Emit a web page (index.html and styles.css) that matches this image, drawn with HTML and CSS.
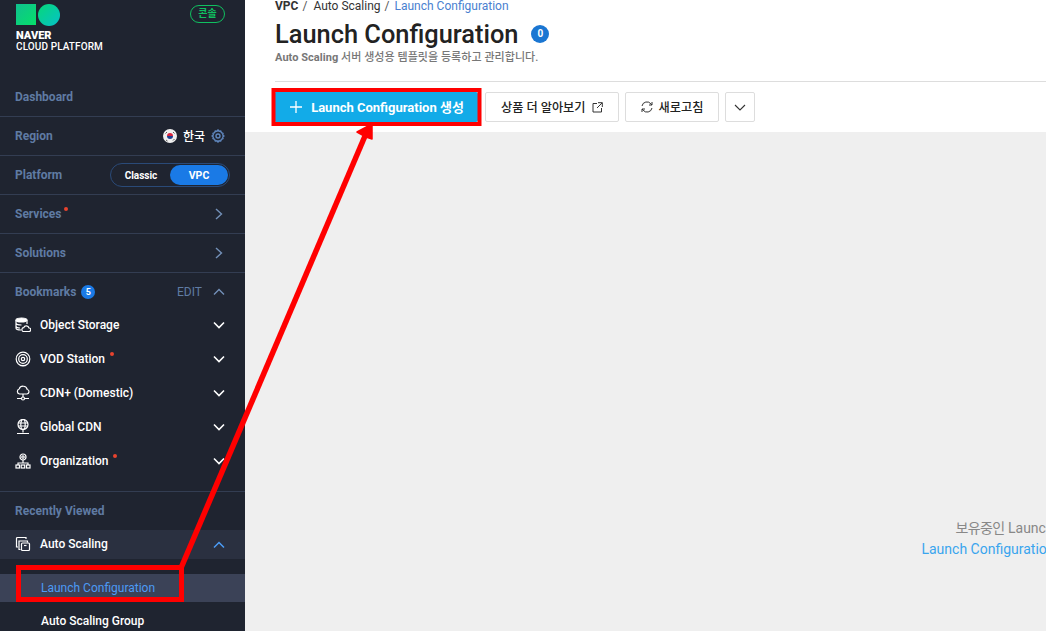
FILE: index.html
```html
<!DOCTYPE html>
<html lang="ko">
<head>
    <meta charset="UTF-8">
    <title>Launch Configuration</title>
    <link rel="stylesheet" href="styles.css">
</head>
<body>
    <aside class="sidebar">
        <div class="brand">
            <div class="brand-left">
                <div class="logo-marks">
                    <span class="logo-square"></span>
                    <span class="logo-circle"></span>
                </div>
                <div class="logo-naver">NAVER</div>
                <div class="logo-cloud">CLOUD PLATFORM</div>
            </div>
            <span class="console-badge">콘솔</span>
        </div>

        <div class="nav-row">Dashboard</div>
        <div class="nav-row">
            <span>Region</span>
            <span class="region">
                <svg class="flag" width="14" height="14" viewBox="0 0 14 14">
                    <circle cx="7" cy="7" r="7" fill="#f0f0f0"/>
                    <path d="M4 7a3 3 0 0 1 6 0z" fill="#d8243c"/>
                    <path d="M4 7a3 3 0 0 0 6 0z" fill="#1d3f8f"/>
                    <path d="M2.500 4.500l1.500-1.500M3 11l1.500 1M10 3l1.500 1.500M10 11.500l1.500-1.500" stroke="#555" stroke-width="1"/>
                </svg>
                <span class="region-name">한국</span>
                <svg class="gear" width="14" height="14" viewBox="0 0 14 14" fill="none" stroke="#5f86bd" stroke-width="1.400">
                    <path d="M7 1l1 1.300 1.700-.3.700 1.600 1.600.7-.3 1.700L13 7l-1.300 1 .3 1.700-1.600.7-.7 1.600-1.700-.3L7 13l-1-1.300-1.700.3-.7-1.600-1.600-.7.3-1.700L1 7l1.300-1L2 4.300l1.600-.7.7-1.600 1.700.3z"/>
                    <circle cx="7" cy="7" r="2"/>
                </svg>
            </span>
        </div>
        <div class="nav-row">
            <span>Platform</span>
            <div class="toggle">
                <span class="toggle-item">Classic</span>
                <span class="toggle-item toggle-on">VPC</span>
            </div>
        </div>
        <div class="nav-row">
            <span class="dotted">Services</span>
            <svg class="chev-right" width="8" height="12" viewBox="0 0 8 12"><path d="M1 1l5.500 5L1 11"/></svg>
        </div>
        <div class="nav-row">
            <span>Solutions</span>
            <svg class="chev-right" width="8" height="12" viewBox="0 0 8 12"><path d="M1 1l5.500 5L1 11"/></svg>
        </div>

        <div class="nav-row bookmarks-head">
            <span class="bookmarks-title">Bookmarks <span class="count">5</span></span>
            <span class="edit">EDIT
                <svg class="chev-up" width="12" height="8" viewBox="0 0 12 8"><path d="M1 6.500L6 1.500l5 5"/></svg>
            </span>
        </div>

        <ul class="bookmarks">
            <li class="item">
                <svg class="item-icon" width="16" height="16" viewBox="0 0 16 16">
                    <ellipse cx="6.500" cy="3" rx="5.500" ry="2" fill="#fff"/>
                    <path d="M1 3v8c0 1 2 2 5 2M12 3v4M1 6c0 1 2.500 2 5.500 2M1 9c0 1 2 2 4 2"/>
                    <path d="M8 14.500h6a1.500 1.500 0 0 0 0-3.500 2.800 2.800 0 0 0-5.300-.3A2 2 0 0 0 8 14.500z"/>
                </svg>
                <span class="item-label">Object Storage</span>
                <svg class="chev-down" width="12" height="8" viewBox="0 0 12 8"><path d="M1 1.500l5 5 5-5"/></svg>
            </li>
            <li class="item">
                <svg class="item-icon" width="16" height="16" viewBox="0 0 16 16">
                    <circle cx="8" cy="8" r="6.800"/>
                    <circle cx="8" cy="8" r="4.300"/>
                    <circle cx="8" cy="8" r="1.700"/>
                    <path d="M5 14.500h6"/>
                </svg>
                <span class="item-label dotted-item">VOD Station</span>
                <svg class="chev-down" width="12" height="8" viewBox="0 0 12 8"><path d="M1 1.500l5 5 5-5"/></svg>
            </li>
            <li class="item">
                <svg class="item-icon" width="16" height="16" viewBox="0 0 16 16">
                    <path d="M4.500 9h7.500a2.300 2.300 0 0 0 .3-4.500 4.300 4.300 0 0 0-8.200-.5 2.600 2.600 0 0 0 .4 5z"/>
                    <path d="M8 9v3M2 13.500h4.500M9.500 13.500H14"/>
                    <circle cx="8" cy="13.500" r="1.500"/>
                </svg>
                <span class="item-label">CDN+ (Domestic)</span>
                <svg class="chev-down" width="12" height="8" viewBox="0 0 12 8"><path d="M1 1.500l5 5 5-5"/></svg>
            </li>
            <li class="item">
                <svg class="item-icon" width="16" height="16" viewBox="0 0 16 16">
                    <circle cx="8" cy="5.500" r="5"/>
                    <ellipse cx="8" cy="5.500" rx="2.200" ry="5"/>
                    <path d="M3 4h10M3 7h10M8 10.500v3M2 14.500h12"/>
                </svg>
                <span class="item-label">Global CDN</span>
                <svg class="chev-down" width="12" height="8" viewBox="0 0 12 8"><path d="M1 1.500l5 5 5-5"/></svg>
            </li>
            <li class="item">
                <svg class="item-icon" width="16" height="16" viewBox="0 0 16 16">
                    <circle cx="8" cy="4" r="3"/>
                    <circle cx="8" cy="4" r="1.200"/>
                    <path d="M8 7v3M3 12v-2h10v2"/>
                    <rect x="1" y="12" width="3.500" height="3"/>
                    <rect x="6.200" y="12" width="3.500" height="3"/>
                    <rect x="11.500" y="12" width="3.500" height="3"/>
                </svg>
                <span class="item-label dotted-item">Organization</span>
                <svg class="chev-down" width="12" height="8" viewBox="0 0 12 8"><path d="M1 1.500l5 5 5-5"/></svg>
            </li>
        </ul>

        <div class="recent">
            <div class="recent-title">Recently Viewed</div>
            <div class="item item-open">
                <svg class="item-icon" width="16" height="16" viewBox="0 0 16 16">
                    <path d="M3 11H1.500V2.500a1 1 0 0 1 1-1H11V3"/>
                    <path d="M5.500 13.500H4V5h8.500v1.500"/>
                    <rect x="6.500" y="7" width="8" height="7.500" rx="1"/>
                    <path d="M9 9.500h2.500"/>
                </svg>
                <span class="item-label">Auto Scaling</span>
                <svg class="chev-up blue" width="12" height="8" viewBox="0 0 12 8"><path d="M1 6.500L6 1.500l5 5"/></svg>
            </div>
            <div class="sub-item sub-active">Launch Configuration</div>
            <div class="sub-item">Auto Scaling Group</div>
        </div>
    </aside>

    <main class="main">
        <div class="page-head">
            <div class="crumbs">
                <b>VPC</b><i>/</i><span>Auto Scaling</span><i>/</i><span class="crumb-now">Launch Configuration</span>
            </div>
            <div class="title-row">
                <h1>Launch Configuration</h1>
                <span class="title-count">0</span>
            </div>
            <p class="subtitle"><b>Auto Scaling</b> 서버 생성용 템플릿을 등록하고 관리합니다.</p>
        </div>
        <div class="toolbar">
            <button class="btn btn-primary">
                <svg width="12" height="12" viewBox="0 0 12 12"><path d="M6 0v12M0 6h12" stroke="#fff" stroke-width="1.300"/></svg>
                <span class="btn-label">Launch Configuration 생성</span>
            </button>
            <button class="btn">상품 더 알아보기
                <svg width="11" height="11" viewBox="0 0 11 11" fill="none" stroke="#333" stroke-width="1"><path d="M5 1.500H1v8.500h8.500V6M6 .700h4.300V5M10.200 .800L5 6"/></svg>
            </button>
            <button class="btn">
                <svg width="12" height="12" viewBox="0 0 12 12" fill="none" stroke="#333" stroke-width="1"><path d="M1 5a5 5 0 0 1 9-2l1 1M11 7a5 5 0 0 1-9 2L1 8"/><path d="M11 1v3H8M1 11V8h3"/></svg>
                새로고침
            </button>
            <button class="btn btn-icon">
                <svg width="12" height="7" viewBox="0 0 12 7" fill="none" stroke="#333" stroke-width="1.100"><path d="M1 1l5 5 5-5"/></svg>
            </button>
        </div>
        <div class="empty">
            <p><span class="empty-word">보유중인</span> Launch Configuration이 없습니다.</p>
            <p class="empty-link">Launch Configuration 생성 후 바로 이용할 수 있습니다.</p>
        </div>
    </main>

    <!-- red annotation drawn on top of the screenshot -->
    <svg class="annotation" width="1046" height="631" viewBox="0 0 1046 631">
        <rect x="273.500" y="90" width="206" height="34" fill="none" stroke="#f00" stroke-width="4"/>
        <rect x="18.500" y="567.500" width="163" height="32" fill="none" stroke="#f00" stroke-width="5"/>
        <path d="M181 568L365 136" stroke="#f00" stroke-width="5.500" fill="none"/>
        <path d="M372 124L372 139 366 137 357 132z" fill="#f00" stroke="#f00" stroke-width="1.500" stroke-linejoin="round"/>
    </svg>
</body>
</html>
```

FILE: styles.css
```css
:root {
    --side-bg: #1f2430;
    --side-line: #333d52;
    --side-muted: #5f7ba3;
    --blue: #1a7ae6;
    --font-family: Roboto, "Noto Sans CJK KR", sans-serif;
}

html, body {
    height: 100%;
}

body {
    margin: 0;
    display: flex;
    overflow: hidden;
    font-family: var(--font-family);
    background: #fff;
    color: #222;
}

p, h1, ul {
    margin: 0;
    padding: 0;
}

/* sidebar */
.sidebar {
    flex: none;
    width: 245px;
    height: 631px;
    overflow: hidden;
    background: var(--side-bg);
    color: var(--side-muted);
    font-size: 12px;
    font-weight: 700;
}

.brand {
    height: 78px;
    box-sizing: border-box;
    padding: 4px 20px 0 16px;
    display: flex;
    justify-content: space-between;
    align-items: flex-start;
}

.logo-marks {
    display: flex;
    gap: 2px;
    margin-bottom: 5px;
}

.logo-square {
    width: 20px;
    height: 21px;
    background: linear-gradient(135deg, #10c08f, #06e06a);
}

.logo-circle {
    width: 22px;
    height: 22px;
    border-radius: 50%;
    background: linear-gradient(135deg, #06d878, #06c2c8);
}

.logo-naver {
    color: #fff;
    font-size: 11px;
    font-weight: 900;
    line-height: 10px;
}

.logo-cloud {
    color: #fff;
    font-size: 10px;
    font-weight: 500;
    letter-spacing: .1px;
    line-height: 11px;
}

.console-badge {
    width: 35px;
    height: 18px;
    box-sizing: border-box;
    margin-top: 1px;
    border: 1px solid #10c060;
    border-radius: 9px;
    color: #10c060;
    font-size: 10px;
    line-height: 16px;
    text-align: center;
}

.nav-row {
    height: 39px;
    box-sizing: border-box;
    padding: 0 20px 0 15px;
    display: flex;
    justify-content: space-between;
    align-items: center;
    border-bottom: 1px solid var(--side-line);
}

.region {
    display: flex;
    align-items: center;
    gap: 6px;
}

.region-name {
    margin-top: -2px;
    color: #fff;
    font-weight: 500;
}

.toggle {
    width: 120px;
    height: 24px;
    box-sizing: border-box;
    margin-right: -5px;
    padding: 1px;
    border: 1px solid #2a4a78;
    border-radius: 12px;
    display: flex;
    justify-content: flex-end;
    align-items: stretch;
}

.toggle-item {
    width: 58px;
    border-radius: 10px;
    color: #fff;
    font-size: 10px;
    line-height: 22px;
    text-align: center;
}

.toggle-on {
    background: var(--blue);
    font-size: 10.500px;
}

.dotted, .dotted-item {
    position: relative;
}

.dotted::after, .dotted-item::after {
    content: "";
    position: absolute;
    top: 0;
    right: -6px;
    width: 4px;
    height: 4px;
    border-radius: 50%;
    background: #e8432e;
}

.dotted-item::after {
    right: -9px;
}

.chev-right path, .chev-up path, .chev-down path {
    fill: none;
    stroke-width: 1.400;
}

.chev-right {
    margin-right: 2px;
}

.chev-right path, .chev-up path {
    stroke: #7390b8;
}

.chev-down path {
    stroke: #fff;
    stroke-width: 1.600;
}

.chev-up.blue path {
    stroke: #4c9bf5;
    stroke-width: 1.500;
}

.bookmarks-head {
    height: 37px;
    border-bottom: 0;
}

.bookmarks-title {
    display: flex;
    align-items: center;
    gap: 5px;
}

.count {
    width: 14px;
    height: 14px;
    border-radius: 50%;
    background: var(--blue);
    color: #fff;
    font-size: 9px;
    line-height: 14px;
    text-align: center;
}

.edit {
    display: flex;
    align-items: center;
    gap: 11px;
    font-weight: 400;
}

.bookmarks {
    list-style: none;
    margin-top: -2px;
    padding-bottom: 13px;
    border-bottom: 1px solid var(--side-line);
}

.item {
    height: 34px;
    box-sizing: border-box;
    padding: 0 20px 0 15px;
    display: flex;
    align-items: center;
    color: #fff;
    font-weight: 500;
}

.item-icon {
    flex: none;
    margin-right: 9px;
    fill: none;
    stroke: #fff;
    stroke-width: 1.200;
}

.item-label {
    margin-right: auto;
}

.recent-title {
    height: 38px;
    padding-left: 15px;
    line-height: 38px;
}

.item-open {
    height: 29px;
    background: #2a3040;
}

.item-open .item-label, .item-open .item-icon {
    margin-top: -2px;
}

.sub-item {
    height: 28px;
    margin-top: 5px;
    padding-left: 41px;
    color: #fff;
    font-weight: 500;
    line-height: 28px;
}

.sub-active {
    margin-top: 15px;
    background: #3b4257;
    color: #4c9bf5;
    font-weight: 400;
}

/* main area runs past the right edge of the window */
.main {
    flex: none;
    width: 1678px;
    display: flex;
    flex-direction: column;
    min-height: 0;
}

.page-head {
    height: 82px;
    box-sizing: border-box;
    margin-left: 30px;
    border-bottom: 1px solid #ddd;
}

.crumbs {
    display: flex;
    font-size: 12px;
    line-height: 12px;
    color: #333;
}

.crumbs i {
    margin: 0 6px 0 4px;
    font-style: normal;
    color: #555;
}

.crumb-now {
    margin-left: -1px;
    color: #4a7fd0;
}

.title-row {
    display: flex;
    align-items: center;
    gap: 13px;
    margin-top: 5px;
}

h1 {
    font-size: 25.400px;
    font-weight: 500;
    line-height: 34px;
    color: #222;
}

.title-count {
    width: 18px;
    height: 18px;
    border-radius: 50%;
    background: #1a76d2;
    color: #fff;
    font-size: 10px;
    font-weight: 700;
    line-height: 18px;
    text-align: center;
}

.subtitle {
    font-size: 11px;
    letter-spacing: .05px;
    line-height: 14px;
    color: #777;
    font-weight: 500;
}

.toolbar {
    height: 50px;
    box-sizing: border-box;
    padding: 10px 0 0 29px;
    display: flex;
    gap: 6px;
}

.btn {
    height: 30px;
    padding: 0 15px;
    display: flex;
    align-items: center;
    gap: 6px;
    border: 1px solid #ddd;
    border-radius: 2px;
    background: #fff;
    color: #222;
    font-family: var(--font-family);
    font-size: 12.200px;
    font-weight: 500;
}

.btn-primary {
    width: 204px;
    margin-right: 1px;
    padding: 0 0 0 2px;
    justify-content: center;
    gap: 9px;
    border: 0;
    background: #12abe8;
    color: #fff;
    font-size: 13px;
    font-weight: 700;
}

.btn-label {
    margin-top: -2px;
}

.btn-icon {
    width: 30px;
    padding: 0;
    justify-content: center;
}

.empty {
    flex: 1;
    padding-top: 386px;
    background: #efefef;
    color: #888;
    font-size: 14px;
    line-height: 21px;
    text-align: center;
}

.empty-word {
    letter-spacing: -.6px;
}

.empty-link {
    color: #3aa5ee;
}

.annotation {
    position: absolute;
    top: 0;
    left: 0;
    pointer-events: none;
}
```
